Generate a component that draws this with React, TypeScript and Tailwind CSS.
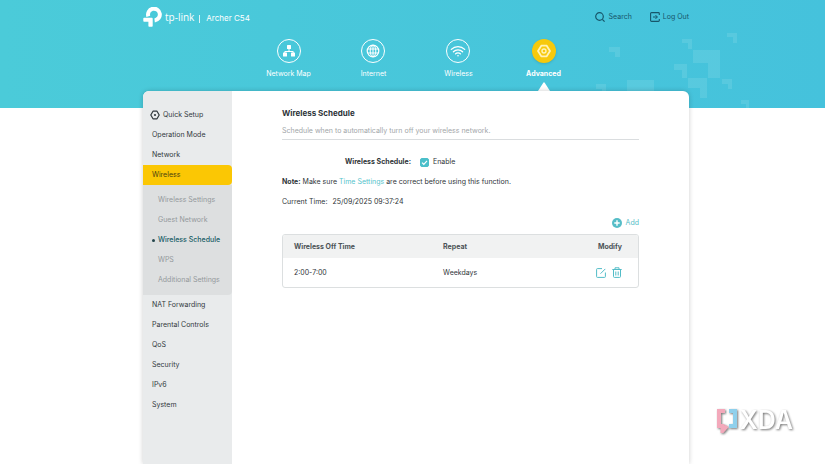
import React from "react";

const tabs = ["Network Map", "Internet", "Wireless", "Advanced"] as const;
type Tab = (typeof tabs)[number];

const wirelessPages = ["Wireless Settings", "Guest Network", "Wireless Schedule", "WPS", "Additional Settings"];
const lowerSections = ["NAT Forwarding", "Parental Controls", "QoS", "Security", "IPv6", "System"];

function BrandMark() {
  return (
    <svg viewBox="0 0 19 20" className="h-5 w-[19px]" fill="none" aria-hidden="true">
      <path d="M5.300 9.300A5.900 5.900 0 1 1 11.600 13.400" stroke="#fff" strokeWidth="4" />
      <path d="M1.100 10.800H8.800a.9.900 0 0 1 .9.900v7.200a.8.800 0 0 1-.8.800H6.200a.8.800 0 0 1-.8-.8v-4.100H1.100a.8.800 0 0 1-.8-.8v-2.400a.8.800 0 0 1 .8-.8Z" fill="#fff" />
    </svg>
  );
}

function Decoration() {
  return (
    <svg viewBox="0 0 230 108" className="absolute right-0 top-0 h-[108px] w-[230px]" fill="#fff" fillOpacity="0.1" aria-hidden="true">
      <path d="M14 47h11v10h-5v-5h-6z" />
      <path d="M87 39h10v10h-4v-6h-6z" />
      <path d="M132 33h10v10h-4v-6h-6z" />
      <path d="M98 50h27v28h-12V63H98z" />
      <path d="M79 64h13v14h-5v-8h-8z" />
      <path d="M93 78h19v20h-7V88H93z" />
      <path d="M127 79h10v10h-4v-5h-6z" />
      <path d="M1 84h10v10H7v-5H1z" />
      <path d="M32 80h27v28H46V92H32z" />
      <path d="M146 100h8v8h-3v-4h-5z" />
    </svg>
  );
}

function GearIcon({ className }: { className: string }) {
  return (
    <svg viewBox="0 0 14 14" className={className} fill="none" stroke="currentColor" aria-hidden="true">
      <path d="M4.300 1.700h5.400L13 7l-3.300 5.300H4.300L1 7z" strokeWidth="1.800" strokeLinejoin="round" />
      <circle cx="7" cy="7" r="2" strokeWidth="1.400" />
    </svg>
  );
}

function SetupIcon() {
  return (
    <svg viewBox="0 0 10 10" className="size-2.5" fill="none" stroke="currentColor" aria-hidden="true">
      <path d="M3 1.200h4L9.200 5 7 8.800H3L.8 5z" strokeWidth="1.200" strokeLinejoin="round" />
      <circle cx="5" cy="5" r="1.100" fill="currentColor" stroke="none" />
    </svg>
  );
}

function TabIcon({ tab }: { tab: Tab }) {
  if (tab === "Network Map")
    return (
      <svg viewBox="0 0 14 14" className="size-3.5" aria-hidden="true">
        <path d="M7 4v3.500M2.800 10V7.500h8.400V10" fill="none" stroke="#fff" />
        <rect x="5" y="1" width="4" height="4" rx=".5" fill="#fff" />
        <rect x="1" y="8.500" width="4" height="4" rx=".5" fill="#fff" />
        <rect x="9" y="8.500" width="4" height="4" rx=".5" fill="#fff" />
      </svg>
    );
  if (tab === "Internet")
    return (
      <svg viewBox="0 0 14 14" className="size-3.5" fill="none" stroke="#fff" aria-hidden="true">
        <circle cx="7" cy="7" r="5.800" strokeWidth="1.200" />
        <ellipse cx="7" cy="7" rx="2.800" ry="5.800" />
        <path d="M7 1v12M1.800 5h10.400M1.800 9h10.400" />
      </svg>
    );
  if (tab === "Wireless")
    return (
      <svg viewBox="0 0 16 14" className="h-3.5 w-4" fill="none" stroke="#fff" strokeWidth="1.300" strokeLinecap="round" aria-hidden="true">
        <path d="M1.300 5.400a9.500 9.500 0 0 1 13.400 0M3.400 7.700a6.500 6.500 0 0 1 9.200 0M5.500 9.900a3.500 3.500 0 0 1 5 0" />
        <circle cx="8" cy="11.800" r=".8" fill="#fff" stroke="none" />
      </svg>
    );
  return <GearIcon className="size-3.5 text-[#fff3b8]" />;
}

function TopTab({ tab }: { tab: Tab }) {
  const active = tab === "Advanced";
  return (
    <li className="relative flex w-[85px] justify-center">
      <button type="button" className={active ? "flex flex-col items-center font-bold" : "flex flex-col items-center"}>
        <span
          className={
            active
              ? "grid size-6 place-items-center rounded-full bg-[#f7c90c] shadow-sm"
              : "grid size-6 place-items-center rounded-full border border-white"
          }
        >
          <TabIcon tab={tab} />
        </span>
        <span className="mt-1.5 leading-[10px] whitespace-nowrap">{tab}</span>
      </button>
      {active && (
        <svg viewBox="0 0 12 9" className="absolute top-[43px] left-1/2 h-[9px] w-3 -translate-x-1/2" fill="#fff" aria-hidden="true">
          <path d="M0 9 5.300.8q.7-.9 1.400 0L12 9z" />
        </svg>
      )}
    </li>
  );
}

function Header() {
  return (
    <header className="relative h-[108px] bg-linear-to-r from-[#4bcbd9] to-[#45c2dc] pl-[7px] text-white">
      <Decoration />
      <div className="relative mx-auto w-full max-w-[546px]">
        <div className="flex h-[39px] items-start justify-between pt-1.5">
          <div className="flex items-center">
            <BrandMark />
            <span className="ml-[3px] font-['Open_Sans',sans-serif] text-[10px] leading-5">tp-link</span>
            <span className="mt-1 mr-1.5 ml-[5px] h-2 w-px bg-white/80" />
            <span className="pt-0.5 text-[8px] leading-5">Archer C54</span>
          </div>
          <div className="flex items-center gap-[18px] pt-1.5 text-[#17566a]">
            <button type="button" className="flex items-center gap-1">
              <svg viewBox="0 0 10 10" className="size-2.5" fill="none" stroke="currentColor" strokeWidth="1.200" aria-hidden="true">
                <circle cx="4.500" cy="4.500" r="3.800" />
                <path d="m7.300 7.300 2.300 2.300" />
              </svg>
              Search
            </button>
            <button type="button" className="flex items-center gap-[3px]">
              <svg viewBox="0 0 10 10" className="size-2.5" fill="none" stroke="currentColor" aria-hidden="true">
                <path d="M9.300 3V1.500a.9.900 0 0 0-.9-.9H1.500a.9.900 0 0 0-.9.900v7a.9.900 0 0 0 .9.900h6.900a.9.900 0 0 0 .9-.9V7" strokeWidth="1.100" />
                <path d="M3 5h4.200M5.500 3.100 7.400 5 5.500 6.900" />
              </svg>
              Log Out
            </button>
          </div>
        </div>
        <nav aria-label="Main">
          <ul className="flex justify-center">
            {tabs.map((tab) => (
              <TopTab key={tab} tab={tab} />
            ))}
          </ul>
        </nav>
      </div>
    </header>
  );
}

function Sidebar() {
  return (
    <nav aria-label="Advanced" className="w-[89px] shrink-0 rounded-tl-md bg-[#e9ebec] pt-3.5 leading-5 whitespace-nowrap text-[#32393d]">
      <a href="#quick-setup" className="flex items-center gap-[3px] pl-[7px]">
        <SetupIcon />
        Quick Setup
      </a>
      <a href="#operation-mode" className="block pl-[9px]">Operation Mode</a>
      <a href="#network" className="block pl-[9px]">Network</a>
      <a href="#wireless" className="block rounded-r-sm bg-[#fbc704] pl-[9px] text-[#4a4010]">Wireless</a>
      <ul className="rounded-br-sm bg-[#dddfe0] py-[5px]">
        {wirelessPages.map((page) => {
          const current = page === "Wireless Schedule";
          return (
            <li key={page}>
              <a
                href={"#" + page}
                aria-current={current ? "page" : undefined}
                className={current ? "flex items-center gap-[3px] pl-[9px] font-medium text-[#175d66]" : "block pl-[15px] text-[#94999c]"}
              >
                {current && <span className="size-[3px] rounded-full bg-[#24464c]" />}
                {page}
              </a>
            </li>
          );
        })}
      </ul>
      {lowerSections.map((section) => (
        <a key={section} href={"#" + section} className="block pl-[9px]">{section}</a>
      ))}
    </nav>
  );
}

function ScheduleTable() {
  return (
    <div className="overflow-hidden rounded-[3px] border border-[#dcdfe0]">
      <table className="w-full table-fixed text-left">
        <thead className="bg-[#f1f2f2] text-[#4c5256]">
          <tr className="h-[23px]">
            <th scope="col" className="w-[42%] pl-[11px]">Wireless Off Time</th>
            <th scope="col" className="pl-[11px]">Repeat</th>
            <th scope="col" className="w-14 pr-4 text-right">Modify</th>
          </tr>
        </thead>
        <tbody>
          <tr className="h-[29px]">
            <td className="pl-[11px]">2:00-7:00</td>
            <td className="pl-[11px]">Weekdays</td>
            <td className="pr-4">
              <div className="flex justify-end gap-1.5 text-[#52bcc7]">
                <button type="button" aria-label="Edit">
                  <svg viewBox="0 0 10 10" className="size-2.5" fill="none" stroke="currentColor" aria-hidden="true">
                    <path d="M6 .6H1.400a.8.800 0 0 0-.8.800v7.200a.8.800 0 0 0 .8.800h7.200a.8.800 0 0 0 .8-.8V4.500M4.500 5.700 9.300.9" />
                  </svg>
                </button>
                <button type="button" aria-label="Delete">
                  <svg viewBox="0 0 10 11" className="h-[11px] w-2.5" fill="none" stroke="currentColor" aria-hidden="true">
                    <path d="M.3 2.500h9.400M3 2.300V.8h4v1.500M1.500 2.500v7a.9.900 0 0 0 .9.900h5.200a.9.900 0 0 0 .9-.9v-7M3.800 4.500v4M6.200 4.500v4" />
                  </svg>
                </button>
              </div>
            </td>
          </tr>
        </tbody>
      </table>
    </div>
  );
}

function WirelessSchedule() {
  return (
    <main className="min-w-0 flex-1 px-[50px] pt-4">
      <h1 className="text-[8px] leading-3 font-bold text-[#2d3338]">Wireless Schedule</h1>
      <p className="border-b border-[#dadddf] pt-1.5 pb-[3px] leading-[11px] text-[#a2a6a9]">
        Schedule when to automatically turn off your wireless network.
      </p>
      <div className="mt-3 flex h-5 items-center pl-[63px]">
        <span id="schedule-label" className="w-[68px] font-bold whitespace-nowrap">Wireless Schedule:</span>
        <label className="ml-[7px] flex items-center gap-1">
          <span className="relative size-[9px]">
            <input
              type="checkbox"
              defaultChecked
              aria-describedby="schedule-label"
              className="peer block size-[9px] appearance-none rounded-[2px] border border-[#4bbfca] checked:bg-[#4bbfca]"
            />
            <svg viewBox="0 0 9 9" className="pointer-events-none absolute inset-0 hidden size-[9px] peer-checked:block" fill="none" stroke="#fff" strokeWidth="1.200" aria-hidden="true">
              <path d="m2 4.600 1.800 1.700L7 2.900" />
            </svg>
          </span>
          Enable
        </label>
      </div>
      <p className="leading-5">
        <b>Note:</b> Make sure <a href="#time-settings" className="text-[#56c3cc]">Time Settings</a> are correct before using this function.
      </p>
      <p className="flex gap-[5px] leading-5">
        <span>Current Time:</span>
        <time dateTime="2025-09-25T09:37:24">25/09/2025 09:37:24</time>
      </p>
      <div className="flex h-[22px] items-center justify-end">
        <button type="button" className="flex items-center gap-1 text-[#56bdc7]">
          <svg viewBox="0 0 10 10" className="size-2.5" aria-hidden="true">
            <circle cx="5" cy="5" r="5" fill="currentColor" />
            <path d="M5 2.300v5.400M2.300 5h5.400" stroke="#fff" strokeWidth="1.400" />
          </svg>
          Add
        </button>
      </div>
      <ScheduleTable />
    </main>
  );
}

function Watermark() {
  return (
    <div className="fixed right-8 bottom-[30px] flex h-7 items-center drop-shadow-[1px_1px_1px_#777]">
      <svg viewBox="0 0 22 25" className="h-[25px] w-[22px]" fill="none" strokeWidth="4" aria-hidden="true">
        <path d="M9 3H3v15h3.500v5L11 18" stroke="#f3a9bb" />
        <path d="M13 3h6v15h-6" stroke="#8fd0ec" />
      </svg>
      <span className="ml-0.5 font-['Inter',sans-serif] text-[25px] leading-7 font-semibold text-white">XDA</span>
    </div>
  );
}

export default function App() {
  return (
    <div className="flex min-h-screen flex-col bg-white font-['Inter','Liberation_Sans',Arial,sans-serif] text-[7px] leading-[10px] text-[#2f3539]">
      <Header />
      <div className="relative -mt-[17px] flex flex-1 pl-[7px]">
        <div className="mx-auto flex w-full max-w-[546px] rounded-t-md bg-white shadow-[0_0_5px_rgba(0,0,0,0.2)]">
          <Sidebar />
          <WirelessSchedule />
        </div>
      </div>
      <Watermark />
    </div>
  );
}
